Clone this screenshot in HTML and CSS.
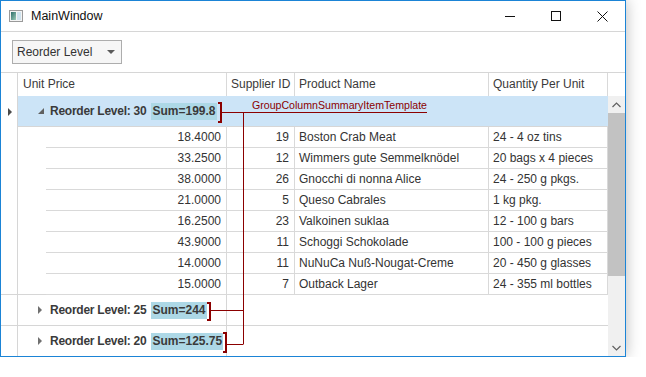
FILE: index.html
```html
<!DOCTYPE html>
<html>
    <head>
        <meta charset="utf-8">
        <title>MainWindow</title>
        <link rel="stylesheet" href="styles.css">
    </head>
    <body>
        <div class="window">
            <div class="titlebar">
                <svg class="app-icon" width="16" height="16" viewBox="0 0 16 16">
                    <defs>
                        <linearGradient id="pane" x1="0" y1="0" x2="1" y2="1">
                            <stop offset="0" stop-color="#2d6e6a"/>
                            <stop offset="1" stop-color="#9ccbb8"/>
                        </linearGradient>
                    </defs>
                    <rect x="1.5" y="2.5" width="13" height="11" fill="#f4f4f4" stroke="#9a9a9a"/>
                    <rect x="3" y="4" width="5" height="8" fill="url(#pane)"/>
                    <rect x="9" y="4" width="4" height="8" fill="#cfe3ee"/>
                </svg>
                <span class="title">MainWindow</span>
                <div class="caption">
                    <span class="cap-btn">
                        <svg width="10" height="10" viewBox="0 0 10 10"><path d="M0 5.5 H10" stroke="#111" stroke-width="1"/></svg>
                    </span>
                    <span class="cap-btn">
                        <svg width="10" height="10" viewBox="0 0 10 10"><rect x="0.5" y="0.5" width="9" height="9" fill="none" stroke="#111" stroke-width="1"/></svg>
                    </span>
                    <span class="cap-btn">
                        <svg width="11" height="11" viewBox="0 0 11 11"><path d="M0.5 0.5 L10.5 10.5 M10.5 0.5 L0.5 10.5" stroke="#111" stroke-width="1"/></svg>
                    </span>
                </div>
            </div>

            <div class="toolbar">
                <div class="combo">
                    <span>Reorder Level</span>
                    <span class="combo-arrow"></span>
                </div>
            </div>

            <div class="grid">
                <div class="grid-head">
                    <div class="rh"></div>
                    <div class="hc c-price">Unit Price</div>
                    <div class="hc c-sup">Supplier ID</div>
                    <div class="hc c-prod">Product Name</div>
                    <div class="hc c-qty">Quantity Per Unit</div>
                    <div class="hc-fill"></div>
                </div>

                <div class="grid-body">
                    <div class="rows">
                        <div class="group-row selected">
                            <div class="rh"><span class="current"></span></div>
                            <div class="gcell">
                                <span class="exp open"></span>
                                <span class="glabel">Reorder Level: 30</span>
                                <span class="sum">Sum=199.8</span>
                            </div>
                            <div class="gfill"></div>
                        </div>

                        <div class="drow"><div class="rh"></div><div class="indent"></div><div class="cell c-price">18.4000</div><div class="cell c-sup">19</div><div class="cell c-prod">Boston Crab Meat</div><div class="cell c-qty">24 - 4 oz tins</div></div>
                        <div class="drow"><div class="rh"></div><div class="indent"></div><div class="cell c-price">33.2500</div><div class="cell c-sup">12</div><div class="cell c-prod">Wimmers gute Semmelknödel</div><div class="cell c-qty">20 bags x 4 pieces</div></div>
                        <div class="drow"><div class="rh"></div><div class="indent"></div><div class="cell c-price">38.0000</div><div class="cell c-sup">26</div><div class="cell c-prod">Gnocchi di nonna Alice</div><div class="cell c-qty">24 - 250 g pkgs.</div></div>
                        <div class="drow"><div class="rh"></div><div class="indent"></div><div class="cell c-price">21.0000</div><div class="cell c-sup">5</div><div class="cell c-prod">Queso Cabrales</div><div class="cell c-qty">1 kg pkg.</div></div>
                        <div class="drow"><div class="rh"></div><div class="indent"></div><div class="cell c-price">16.2500</div><div class="cell c-sup">23</div><div class="cell c-prod">Valkoinen suklaa</div><div class="cell c-qty">12 - 100 g bars</div></div>
                        <div class="drow"><div class="rh"></div><div class="indent"></div><div class="cell c-price">43.9000</div><div class="cell c-sup">11</div><div class="cell c-prod">Schoggi Schokolade</div><div class="cell c-qty">100 - 100 g pieces</div></div>
                        <div class="drow"><div class="rh"></div><div class="indent"></div><div class="cell c-price">14.0000</div><div class="cell c-sup">11</div><div class="cell c-prod">NuNuCa Nuß-Nougat-Creme</div><div class="cell c-qty">20 - 450 g glasses</div></div>
                        <div class="drow last"><div class="rh"></div><div class="indent"></div><div class="cell c-price">15.0000</div><div class="cell c-sup">7</div><div class="cell c-prod">Outback Lager</div><div class="cell c-qty">24 - 355 ml bottles</div></div>

                        <div class="group-row">
                            <div class="rh"></div>
                            <div class="gcell">
                                <span class="exp closed"></span>
                                <span class="glabel">Reorder Level: 25</span>
                                <span class="sum">Sum=244</span>
                            </div>
                            <div class="gfill"></div>
                        </div>
                        <div class="group-row bottom">
                            <div class="rh"></div>
                            <div class="gcell">
                                <span class="exp closed"></span>
                                <span class="glabel">Reorder Level: 20</span>
                                <span class="sum">Sum=125.75</span>
                            </div>
                            <div class="gfill"></div>
                        </div>
                    </div>

                    <div class="vscroll">
                        <div class="sb-btn">
                            <svg width="9" height="6" viewBox="0 0 9 6"><path d="M0.5 5 L4.5 1 L8.5 5" fill="none" stroke="#606060" stroke-width="1.2"/></svg>
                        </div>
                        <div class="sb-track"><div class="sb-thumb"></div></div>
                        <div class="sb-btn">
                            <svg width="9" height="6" viewBox="0 0 9 6"><path d="M0.5 1 L4.5 5 L8.5 1" fill="none" stroke="#606060" stroke-width="1.2"/></svg>
                        </div>
                    </div>
                </div>
            </div>
        </div>

        <!-- callout drawn over the grid -->
        <svg class="callout" width="646" height="377" viewBox="0 0 646 377">
            <g fill="none" stroke="#8b0000">
                <polyline points="218,103 221,103 221,122 218,122" stroke-width="2"/>
                <path d="M222 112.5 H427" stroke-width="1"/>
                <path d="M243.5 112 V344.5" stroke-width="1"/>
                <polyline points="207,303 210,303 210,320 207,320" stroke-width="2"/>
                <path d="M211 310.5 H243" stroke-width="1"/>
                <polyline points="223,333 226,333 226,352 223,352" stroke-width="2"/>
                <path d="M227 344.5 H243" stroke-width="1"/>
            </g>
            <text x="252" y="109" class="callout-text" textLength="175" lengthAdjust="spacingAndGlyphs">GroupColumnSummaryItemTemplate</text>
        </svg>
    </body>
</html>
```

FILE: styles.css
```css
* {
    box-sizing: border-box;
}
body {
    margin: 0;
    background: #fff;
    font-family: "Liberation Sans", Arial, sans-serif;
    font-size: 12px;
    color: #333;
}
.window {
    width: 626px;
    height: 357px;
    border: 1px solid #1b84d6;
    box-shadow: 0 0 14px rgba(0, 0, 0, 0.28);
    background: #fff;
    display: flex;
    flex-direction: column;
}

/* title bar */
.titlebar {
    height: 31px;
    border-bottom: 1px solid #d6d6d6;
    display: flex;
    align-items: center;
    padding-left: 7px;
    flex-shrink: 0;
}
.app-icon {
    display: block;
}
.title {
    margin-left: 7px;
    color: #111;
    font-size: 12.5px;
}
.caption {
    margin-left: auto;
    display: flex;
    height: 100%;
}
.cap-btn {
    width: 46px;
    display: flex;
    align-items: center;
    justify-content: center;
}
.cap-btn svg {
    display: block;
}

/* toolbar with combo */
.toolbar {
    height: 40px;
    padding: 8px 11px;
    flex-shrink: 0;
}
.combo {
    width: 110px;
    height: 24px;
    border: 1px solid #adadad;
    background: #f6f6f6;
    display: flex;
    align-items: center;
    padding: 0 6px 0 4px;
    color: #333;
}
.combo-arrow {
    margin-left: auto;
    width: 0;
    height: 0;
    border-style: solid;
    border-width: 4px 4px 0 4px;
    border-color: #5a5a5a transparent transparent transparent;
}

/* grid */
.grid {
    flex: 1;
    border-top: 1px solid #d6d6d6;
    display: flex;
    flex-direction: column;
    min-height: 0;
}
.grid-head {
    display: flex;
    height: 23px;
    flex-shrink: 0;
}
.rh {
    width: 17px;
    flex-shrink: 0;
    border-right: 1px solid #d6d6d6;
    display: flex;
    align-items: center;
}
.hc {
    border-right: 1px solid #d9d9d9;
    line-height: 22px;
    padding-left: 4px;
    color: #3a3a3a;
    white-space: nowrap;
}
.hc.c-price {
    padding-left: 5px;
}
.hc-fill {
    flex: 1;
}
.c-price {
    width: 209px;
}
.c-sup {
    width: 68px;
}
.c-prod {
    width: 194px;
}
.c-qty {
    width: 119px;
}

.grid-body {
    flex: 1;
    display: flex;
    min-height: 0;
}
.rows {
    width: 607px;
    display: flex;
    flex-direction: column;
}

/* group rows */
.group-row {
    display: flex;
    height: 31px;
    flex-shrink: 0;
}
.group-row.bottom {
    height: 30px;
}
.group-row .rh {
    border-bottom: 1px solid #d6d6d6;
}
.group-row.selected .rh,
.group-row.bottom .rh {
    border-bottom: 0;
}
.gcell {
    width: 209px;
    border-right: 1px solid #d6d6d6;
    border-bottom: 1px solid #d6d6d6;
    display: flex;
    align-items: center;
    padding-left: 20px;
    white-space: nowrap;
}
.gfill {
    flex: 1;
    border-bottom: 1px solid #d6d6d6;
}
.group-row.bottom .gcell,
.group-row.bottom .gfill {
    border-bottom: 0;
}
.group-row.selected .gcell,
.group-row.selected .gfill {
    background: #cce4f7;
}
.group-row.selected .gcell {
    border-right-color: #cce4f7;
}
.current {
    margin-left: 7px;
    width: 0;
    height: 0;
    border-style: solid;
    border-width: 4px 0 4px 4px;
    border-color: transparent transparent transparent #4a4a4a;
}
.exp {
    width: 0;
    height: 0;
    border-style: solid;
}
.exp.open {
    border-width: 0 0 6px 6px;
    border-color: transparent transparent #606060 transparent;
    margin-right: 6px;
}
.exp.closed {
    border-width: 4px 0 4px 4px;
    border-color: transparent transparent transparent #707070;
    margin-right: 8px;
}
.glabel {
    font-weight: bold;
    font-size: 12px;
    letter-spacing: -0.25px;
    color: #3a3a3a;
    margin-right: 5px;
}
.sum {
    background: #add8e6;
    font-weight: bold;
    line-height: 17px;
    padding: 0 1px;
    color: #3a3a3a;
}

/* data rows */
.drow {
    display: flex;
    height: 21px;
    flex-shrink: 0;
}
.drow .indent {
    width: 28px;
    flex-shrink: 0;
}
.drow.last .rh,
.drow.last .indent {
    border-bottom: 1px solid #d6d6d6;
}
.cell {
    border-right: 1px solid #d9d9d9;
    border-bottom: 1px solid #d9d9d9;
    line-height: 20px;
    white-space: nowrap;
    overflow: hidden;
    color: #333;
}
.cell.c-price {
    width: 181px;
    text-align: right;
    padding-right: 5px;
}
.cell.c-sup {
    text-align: right;
    padding-right: 5px;
}
.cell.c-prod,
.cell.c-qty {
    padding-left: 4px;
}

/* scrollbar */
.vscroll {
    width: 17px;
    background: #f0f0f0;
    display: flex;
    flex-direction: column;
}
.sb-btn {
    height: 17px;
    display: flex;
    align-items: center;
    justify-content: center;
    flex-shrink: 0;
}
.sb-btn svg {
    display: block;
}
.sb-track {
    flex: 1;
}
.sb-thumb {
    height: 163px;
    background: #c2c2c2;
}

/* callout overlay */
.callout {
    position: absolute;
    left: 0;
    top: 0;
    pointer-events: none;
}
.callout-text {
    font-family: "Liberation Sans", Arial, sans-serif;
    font-size: 11.5px;
    fill: #8b0000;
}
```
